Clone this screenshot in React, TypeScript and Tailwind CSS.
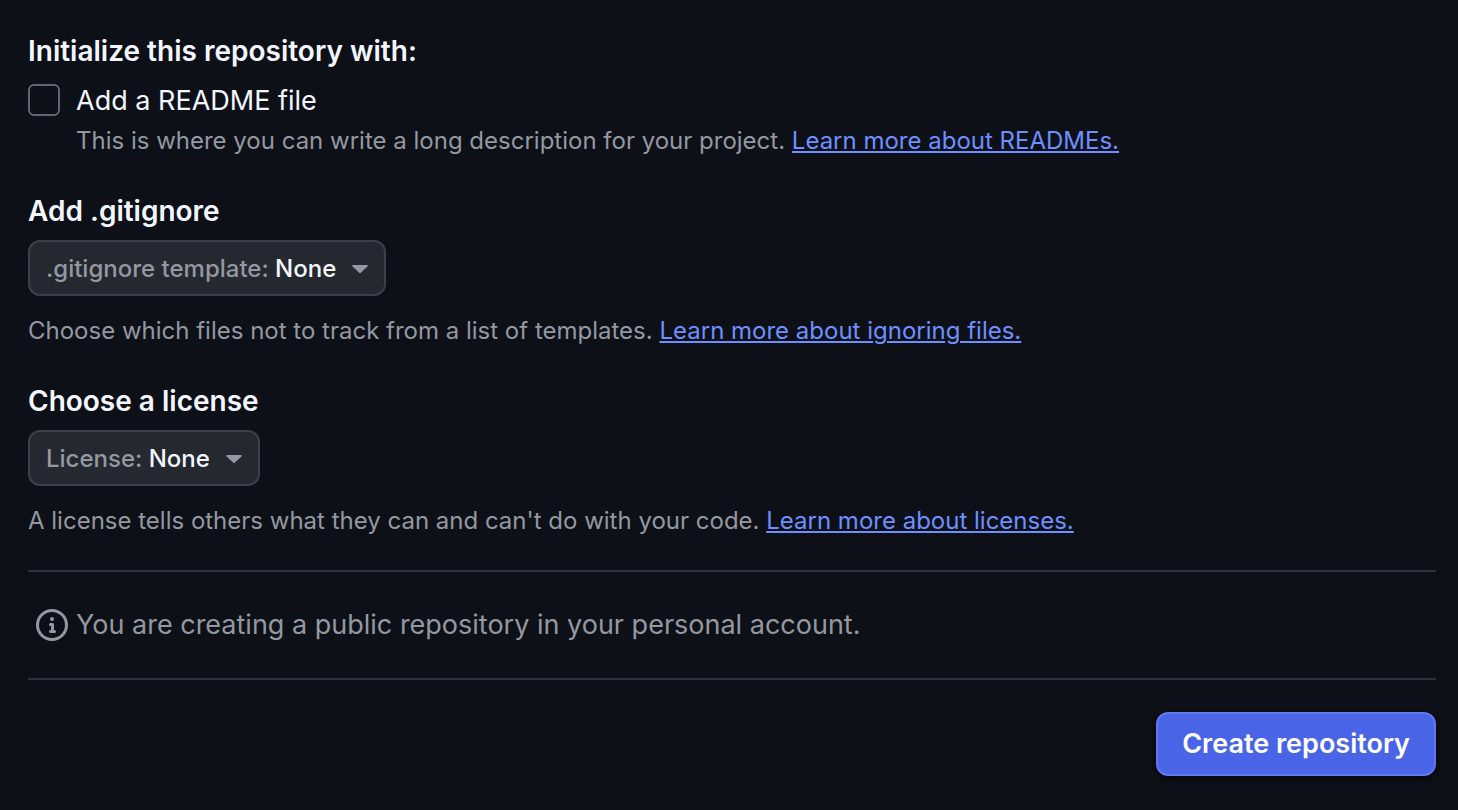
import React from 'react';

const Caret = () => (
  <svg width="16" height="8" viewBox="0 0 16 8" aria-hidden="true" className="shrink-0 fill-[#9498a1]">
    <path d="M1.2 0h13.6c.9 0 1.3 1 .7 1.6L8.7 7.7a1 1 0 0 1-1.4 0L.5 1.6C-.1 1 .3 0 1.2 0Z" />
  </svg>
);

const Picker = ({ label, value }: { label: string; value: string }) => (
  <button
    type="button"
    className="flex h-14 w-fit items-center gap-4 rounded-xl border-2 border-[#3d4048] bg-[#25282f] px-4 pt-0.5 text-2xl font-medium text-[#f4f6ff]"
  >
    <span>
      <span className="text-[#9498a1]">{label}</span> {value}
    </span>
    <Caret />
  </button>
);

const link = 'text-[#6e8fff] underline decoration-2 underline-offset-2';

export default function App() {
  return (
    <form className="min-h-screen bg-[#0d1117] pt-[31px] pr-[22px] pb-8 pl-7 font-['Inter',sans-serif] text-[#9498a1]">
      <fieldset>
        <legend className="text-[28px] leading-10 font-semibold text-[#f4f6ff]">Initialize this repository with:</legend>
        <div className="mt-[13px] flex items-start gap-4">
          <input
            id="readme"
            type="checkbox"
            className="size-8 shrink-0 appearance-none rounded-md border-2 border-[#62656e] checked:bg-[#4a63ea]"
          />
          <div>
            <label htmlFor="readme" className="block text-[27px] leading-[34px] text-[#f4f6ff]">Add a README file</label>
            <p className="mt-[7px] text-2xl leading-8">
              This is where you can write a long description for your project.{' '}
              <a href="#readmes" className={link}>Learn more about READMEs.</a>
            </p>
          </div>
        </div>
      </fieldset>

      <section className="mt-9">
        <h2 className="text-[28px] leading-9 font-semibold text-[#f4f6ff]">Add .gitignore</h2>
        <div className="mt-[11px]">
          <Picker label=".gitignore template:" value="None" />
        </div>
        <p className="mt-[19px] text-2xl leading-8">
          Choose which files not to track from a list of templates.{' '}
          <a href="#ignoring" className={link}>Learn more about ignoring files.</a>
        </p>
      </section>

      <section className="mt-9">
        <h2 className="text-[28px] leading-9 font-semibold text-[#f4f6ff]">Choose a license</h2>
        <div className="mt-[11px]">
          <Picker label="License:" value="None" />
        </div>
        <p className="mt-[19px] text-2xl leading-8">
          A license tells others what they can and can't do with your code.{' '}
          <a href="#licenses" className={link}>Learn more about licenses.</a>
        </p>
      </section>

      <div className="mt-[33px] flex h-[110px] items-center gap-2 border-y-2 border-[#2f323b] pl-2 text-[27px]">
        <svg width="32" height="32" viewBox="0 0 16 16" aria-hidden="true" className="shrink-0 fill-current">
          <path d="M0 8a8 8 0 1 1 16 0A8 8 0 0 1 0 8Zm8-6.5a6.5 6.5 0 1 0 0 13 6.5 6.5 0 0 0 0-13ZM6.5 7.75A.75.75 0 0 1 7.25 7h1a.75.75 0 0 1 .75.75v2.75h.25a.75.75 0 0 1 0 1.5h-2a.75.75 0 0 1 0-1.5h.25v-2h-.25a.75.75 0 0 1-.75-.75ZM8 6a1 1 0 1 1 0-2 1 1 0 0 1 0 2Z" />
        </svg>
        <p>You are creating a public repository in your personal account.</p>
      </div>

      <div className="mt-8 flex justify-end">
        <button
          type="submit"
          className="h-16 rounded-xl border-2 border-[#6079ee] bg-[#4a64e8] px-6 text-[27px] font-semibold text-white shadow-[0_2px_6px_#010409]"
        >
          Create repository
        </button>
      </div>
    </form>
  );
}
